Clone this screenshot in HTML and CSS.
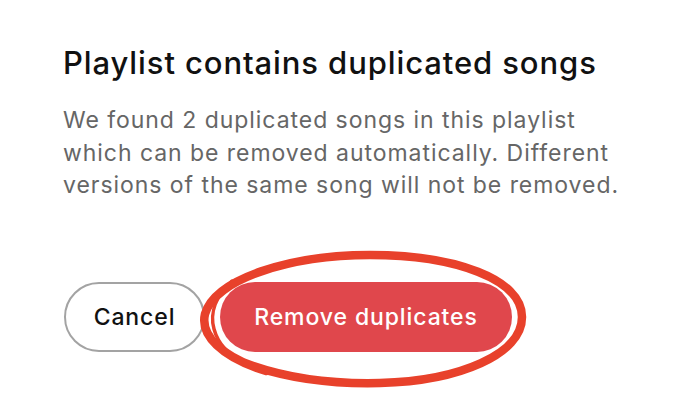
FILE: index.html
```html
<!DOCTYPE html>
<html lang="en">
<head>
    <meta charset="UTF-8">
    <meta name="viewport" content="width=device-width, initial-scale=1.0">
    <title>Duplicated songs</title>
    <link rel="stylesheet" href="styles.css">
</head>
<body>
    <div class="dialog">
        <h2 class="dialog-title">Playlist contains duplicated songs</h2>
        <p class="dialog-text">We found 2 duplicated songs in this playlist which can be removed automatically. Different versions of the same song will not be removed.</p>

        <div class="actions">
            <button class="btn btn-cancel">Cancel</button>
            <div class="highlight-wrap">
                <button class="btn btn-remove">Remove duplicates</button>
                <!-- hand drawn circle around the main action -->
                <svg class="scribble" width="340" height="146" viewBox="0 0 340 146">
                    <path d="M36 32 C 22 45, 13 62, 18 80 C 22 95, 32 106, 49 114"
                          fill="none" stroke="#e8412b" stroke-width="3.5" stroke-linecap="round"/>
                    <path d="M49 114 C 94 131, 144 135, 184 134 C 264 132, 326 105, 326 68 C 326 30, 259 6, 174 6 C 94 6, 19 30, 9 65 C 4 86, 25 108, 70 122"
                          fill="none" stroke="#e8412b" stroke-width="8.5" stroke-linecap="round"/>
                </svg>
            </div>
        </div>
    </div>
</body>
</html>
```

FILE: styles.css
```css
* {
    margin: 0;
    padding: 0;
    box-sizing: border-box;
    font-family: 'Inter', 'Noto Sans', sans-serif;
}

body {
    background-color: #fff;
    width: 694px;
    height: 414px;
    overflow: hidden;
}

.dialog {
    padding: 43px 0 0 63px;
}

.dialog-title {
    font-size: 31px;
    font-weight: 500;
    color: #111;
    letter-spacing: 0.9px;
    line-height: 40px;
    white-space: nowrap;
}

.dialog-text {
    margin-top: 21px;
    width: 580px;
    font-size: 23px;
    line-height: 32.5px;
    letter-spacing: 0.95px;
    color: #666;
}

.actions {
    display: flex;
    align-items: center;
    gap: 15px;
    margin-top: 80px;
    margin-left: 1px;
}

.btn {
    height: 70px;
    border-radius: 35px;
    font-size: 23px;
    font-weight: 500;
    letter-spacing: 0.9px;
    cursor: pointer;
}

.btn-cancel {
    width: 141px;
    background: #fff;
    border: 2px solid #a3a3a3;
    color: #111;
}

.highlight-wrap {
    position: relative;
}

.btn-remove {
    width: 292px;
    background: #e0474c;
    border: none;
    color: #fff;
}

.scribble {
    position: absolute;
    left: -24px;
    top: -33px;
    pointer-events: none;
}
```
